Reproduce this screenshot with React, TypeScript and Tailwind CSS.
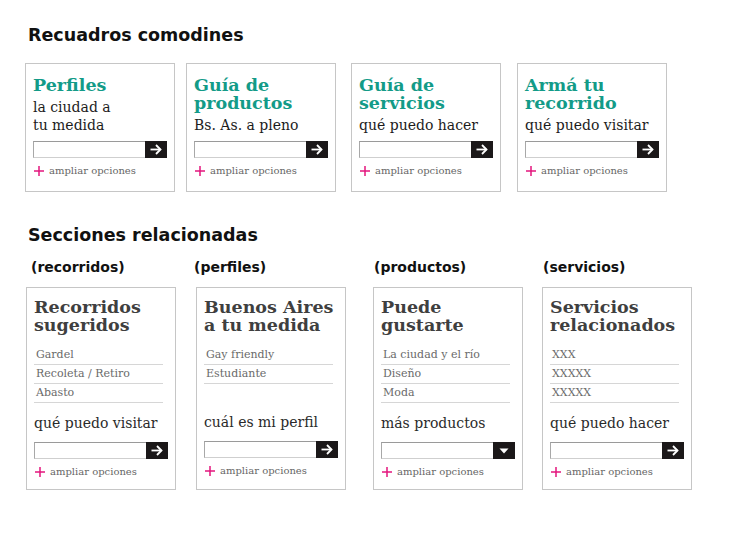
import React from 'react';

const serif = { fontFamily: '"DejaVu Serif", "Liberation Serif", serif' };

const topCards = [
  { title: ['Perfiles'], sub: ['la ciudad a', 'tu medida'], gap: '' },
  { title: ['Guía de', 'productos'], sub: ['Bs. As. a pleno'], gap: 'ml-[11px]' },
  { title: ['Guía de', 'servicios'], sub: ['qué puedo hacer'], gap: 'ml-[15px]' },
  { title: ['Armá tu', 'recorrido'], sub: ['qué puedo visitar'], gap: 'ml-[16px]' },
];

const related = [
  {
    label: '(recorridos)',
    labelGap: 'ml-[31px]',
    title: ['Recorridos', 'sugeridos'],
    items: ['Gardel', 'Recoleta / Retiro', 'Abasto'],
    cta: 'qué puedo visitar',
    select: false,
    gap: 'ml-[26px]',
  },
  {
    label: '(perfiles)',
    labelGap: 'ml-[13px]',
    title: ['Buenos Aires', 'a tu medida'],
    items: ['Gay friendly', 'Estudiante'],
    cta: 'cuál es mi perfil',
    select: false,
    gap: 'ml-[20px]',
  },
  {
    label: '(productos)',
    labelGap: 'ml-[30px]',
    title: ['Puede', 'gustarte'],
    items: ['La ciudad y el río', 'Diseño', 'Moda'],
    cta: 'más productos',
    select: true,
    gap: 'ml-[27px]',
  },
  {
    label: '(servicios)',
    labelGap: 'ml-[19px]',
    title: ['Servicios', 'relacionados'],
    items: ['XXX', 'XXXXX', 'XXXXX'],
    cta: 'qué puedo hacer',
    select: false,
    gap: 'ml-[19px]',
  },
];

function Lines({ lines }: { lines: string[] }) {
  return (
    <>
      {lines.map((t, i) => (
        <React.Fragment key={i}>
          {i > 0 && <br />}
          {t}
        </React.Fragment>
      ))}
    </>
  );
}

function SearchBox({ select = false }: { select?: boolean }) {
  return (
    <div className="flex h-[17px] w-full">
      <div className="flex-1 border-t border-l border-b border-t-[#9a9a9a] border-l-[#a8a8a8] border-b-[#cfcfcf] bg-white" />
      <div className="w-[22px] bg-[#1b1819] flex items-center justify-center">
        {select ? (
          <svg width="10" height="6" viewBox="0 0 10 6">
            <path d="M0.5 0.5 L9.5 0.5 L5 5.5 Z" fill="#fff" />
          </svg>
        ) : (
          <svg width="12" height="11" viewBox="0 0 12 11" fill="none" stroke="#fff" strokeWidth="1.8">
            <path d="M0.5 5.5 H10.5" />
            <path d="M6 1 L10.5 5.5 L6 10" />
          </svg>
        )}
      </div>
    </div>
  );
}

function Ampliar() {
  return (
    <div className="flex items-center h-[14px] pl-[1px]">
      <svg width="10" height="10" viewBox="0 0 10 10" stroke="#e3157c" strokeWidth="1.5">
        <path d="M5 0 V10" />
        <path d="M0 5 H10" />
      </svg>
      <span className="ml-[5px] text-[10px] text-[#666] leading-[14px]" style={serif}>
        ampliar opciones
      </span>
    </div>
  );
}

export default function App() {
  return (
    <div className="w-[731px] h-[538px] bg-white text-[#111]" style={{ fontFamily: '"DejaVu Sans", "Liberation Sans", sans-serif' }}>
      {/* Recuadros comodines */}
      <h1 className="pl-[28px] pt-[25px] text-[17.5px] font-bold leading-[20px]">Recuadros comodines</h1>

      <div className="flex pl-[25px] mt-[18px]">
        {topCards.map((c, i) => (
          <div key={i} className={`${c.gap} w-[150px] h-[129px] border border-[#c6c6c6] px-[7px] pt-[12px] pb-[13px] flex flex-col`}>
            <div className="text-[17.5px] font-bold leading-[18px] text-[#139b88]" style={serif}>
              <Lines lines={c.title} />
            </div>
            <div className="mt-[4px] text-[14px] leading-[18px] text-[#1c1c1c]" style={serif}>
              <Lines lines={c.sub} />
            </div>
            <div className="mt-auto">
              <SearchBox />
            </div>
            <div className="mt-[6px]">
              <Ampliar />
            </div>
          </div>
        ))}
      </div>

      {/* Secciones relacionadas */}
      <h2 className="pl-[28px] mt-[33px] text-[17.5px] font-bold leading-[20px]">Secciones relacionadas</h2>

      <div className="flex mt-[13px]">
        {related.map((c) => (
          <div key={c.label} className={`${c.labelGap} w-[150px] text-[14px] font-bold leading-[18px]`}>
            {c.label}
          </div>
        ))}
      </div>

      <div className="flex mt-[11px]">
        {related.map((c) => (
          <div key={c.title[0]} className={`${c.gap} w-[150px] h-[203px] border border-[#c6c6c6] px-[7px] pt-[10px] pb-[11px] flex flex-col`}>
            <div className="text-[17.5px] font-bold leading-[18px] text-[#3f3f3f]" style={serif}>
              <Lines lines={c.title} />
            </div>
            <div className="mt-[12px] mr-[5px] h-[57px]" style={serif}>
              {c.items.map((t, j) => (
                <div key={j} className="h-[19px] border-b border-[#d6d6d6] pl-[2px] text-[11px] leading-[18px] text-[#6a6a6a]">
                  {t}
                </div>
              ))}
            </div>
            <div className="mt-[11px] text-[14px] leading-[18px] text-[#2a2a2a]" style={serif}>
              {c.cta}
            </div>
            <div className="mt-[10px]">
              <SearchBox select={c.select} />
            </div>
            <div className="mt-[6px]">
              <Ampliar />
            </div>
          </div>
        ))}
      </div>
    </div>
  );
}
